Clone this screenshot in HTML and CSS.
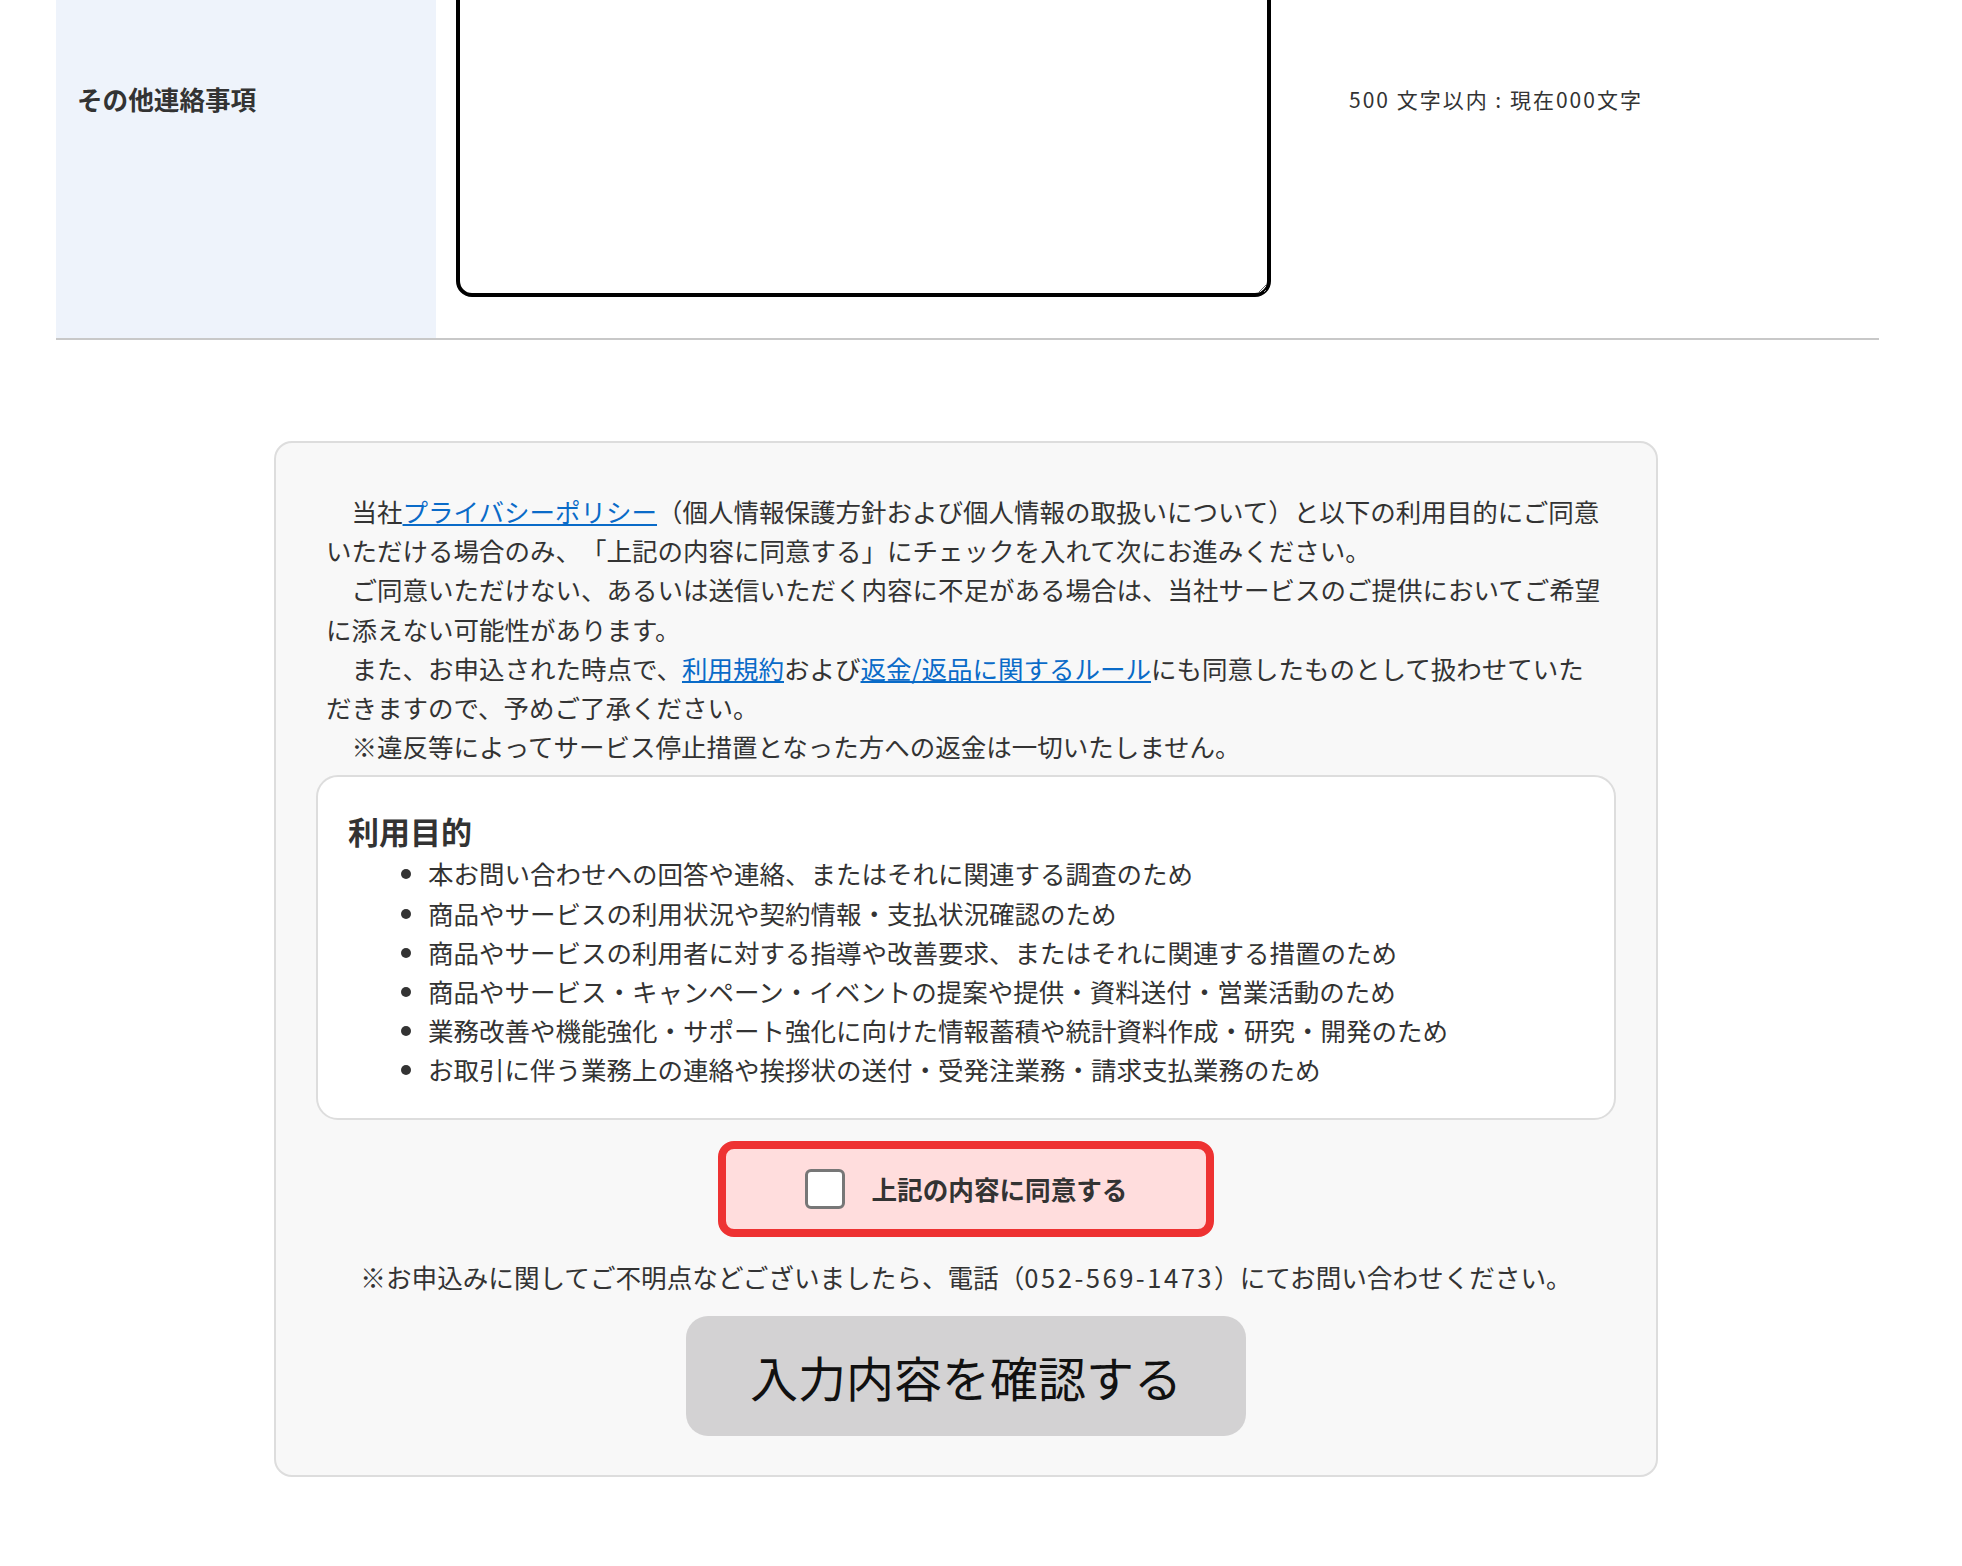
FILE: index.html
```html
<!DOCTYPE html>
<html lang="ja">
<head>
    <meta charset="UTF-8">
    <meta name="viewport" content="width=device-width, initial-scale=1.0">
    <title>お申込みフォーム</title>
    <link rel="stylesheet" href="styles.css">
</head>
<body>
    <div class="form-wrap">
        <div class="form-row">
            <div class="form-label">その他連絡事項</div>
            <div class="form-field">
                <textarea class="form-textarea" name="note"></textarea>
                <span class="char-count">500 文字以内 : 現在000文字</span>
            </div>
        </div>

        <div class="consent-box">
            <p class="consent-text">
                　当社<a href="#">プライバシーポリシー</a>（個人情報保護方針および個人情報の取扱いについて）と以下の利用目的にご同意いただける場合のみ、「上記の内容に同意する」にチェックを入れて次にお進みください。<br>
                　ご同意いただけない、あるいは送信いただく内容に不足がある場合は、当社サービスのご提供においてご希望に添えない可能性があります。<br>
                　また、お申込された時点で、<a href="#">利用規約</a>および<a href="#">返金/返品に関するルール</a>にも同意したものとして扱わせていただきますので、予めご了承ください。<br>
                　※違反等によってサービス停止措置となった方への返金は一切いたしません。
            </p>

            <div class="purpose-box">
                <h3>利用目的</h3>
                <ul>
                    <li>本お問い合わせへの回答や連絡、またはそれに関連する調査のため</li>
                    <li>商品やサービスの利用状況や契約情報・支払状況確認のため</li>
                    <li>商品やサービスの利用者に対する指導や改善要求、またはそれに関連する措置のため</li>
                    <li>商品やサービス・キャンペーン・イベントの提案や提供・資料送付・営業活動のため</li>
                    <li>業務改善や機能強化・サポート強化に向けた情報蓄積や統計資料作成・研究・開発のため</li>
                    <li>お取引に伴う業務上の連絡や挨拶状の送付・受発注業務・請求支払業務のため</li>
                </ul>
            </div>

            <label class="agree">
                <input type="checkbox" class="agree-check">
                <span>上記の内容に同意する</span>
            </label>

            <p class="contact-note">※お申込みに関してご不明点などございましたら、電話（<span class="tel">052-569-1473</span>）にてお問い合わせください。</p>

            <button class="confirm-button" type="button">入力内容を確認する</button>
        </div>
    </div>
</body>
</html>
```

FILE: styles.css
```css
* {
    box-sizing: border-box;
}

body {
    margin: 0;
    background-color: #fff;
    color: #333;
    font-family: "Noto Sans CJK JP", "Noto Sans", sans-serif;
    text-spacing-trim: space-all;
}

.form-wrap {
    width: 1823px;
    margin-left: 56px;
    padding-bottom: 90px;
}

/* 入力行 */
.form-row {
    display: flex;
    margin-top: -141px;
    border-bottom: 2px solid #c8c8c8;
}

.form-label {
    flex: 0 0 380px;
    display: flex;
    align-items: center;
    padding-left: 21px;
    background-color: #eef3fb;
    font-size: 25.6px;
    font-weight: bold;
}

.form-field {
    display: flex;
    align-items: center;
    padding: 41px 20px;
}

.form-textarea {
    display: block;
    width: 815px;
    height: 397px;
    border: 4px solid #000;
    border-radius: 16px;
    background-color: #fff;
    resize: both;
}

.char-count {
    margin-left: 78px;
    font-size: 21px;
    letter-spacing: 2px;
}

/* 同意ボックス */
.consent-box {
    width: 1384px;
    margin: 101px 0 0 218px;
    padding: 48px 40px 39px;
    border: 2px solid #ddd;
    border-radius: 18px;
    background-color: #f8f8f8;
    display: flex;
    flex-direction: column;
    align-items: center;
}

.consent-text {
    align-self: stretch;
    margin: 0 0 10px;
    padding: 0 10px;
    font-size: 25.5px;
    line-height: 39.2px;
}

.consent-text a {
    color: #0a6bc8;
}

.purpose-box {
    align-self: stretch;
    padding: 32px 30px 29px;
    border: 2px solid #ddd;
    border-radius: 22px;
    background-color: #fff;
}

.purpose-box h3 {
    margin: 0;
    font-size: 31px;
    line-height: 44px;
}

.purpose-box ul {
    margin: 0;
    padding-left: 80px;
    font-size: 25.5px;
    line-height: 39.2px;
}

.agree {
    display: flex;
    align-items: center;
    justify-content: center;
    gap: 27px;
    width: 496px;
    height: 96px;
    margin-top: 21px;
    border: 8px solid #ee3232;
    border-radius: 16px;
    background-color: #ffdddd;
    font-size: 25.6px;
    font-weight: bold;
    cursor: pointer;
}

.agree-check {
    appearance: none;
    width: 40px;
    height: 40px;
    margin: 0;
    border: 3px solid #777;
    border-radius: 6px;
    background-color: #fff;
}

.contact-note {
    margin: 20px 0 0;
    font-size: 25.6px;
    line-height: 39.2px;
    text-align: center;
}

.contact-note .tel {
    letter-spacing: 2.5px;
}

.confirm-button {
    width: 560px;
    height: 120px;
    margin-top: 20px;
    border: none;
    border-radius: 22px;
    background-color: #d3d2d3;
    color: #111;
    font-family: inherit;
    font-size: 48px;
    cursor: pointer;
}
```
